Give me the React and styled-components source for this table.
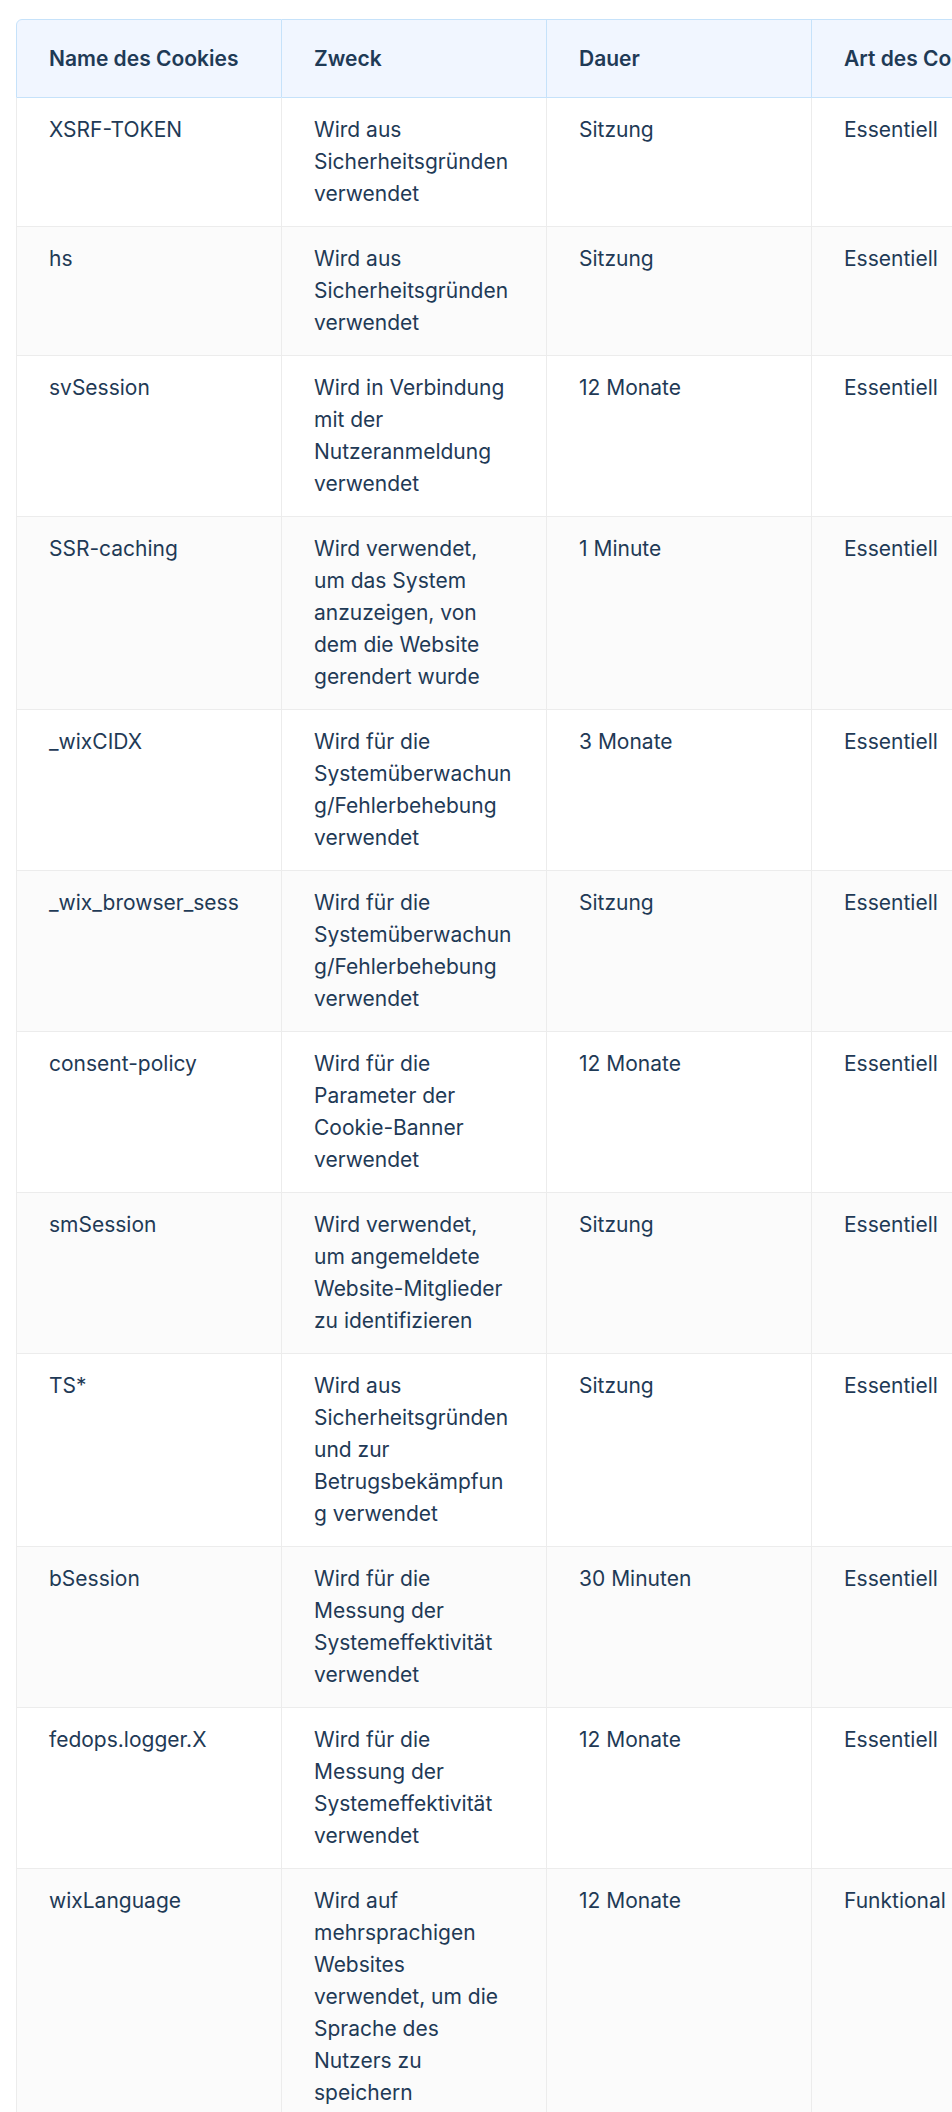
import React from "react";
import styled, { createGlobalStyle } from "styled-components";

const GlobalStyle = createGlobalStyle`
  html, body {
    margin: 0;
    padding: 0;
    background: #ffffff;
    overflow-x: hidden;
  }
  * { box-sizing: border-box; }
`;

const Page = styled.div`
  padding: 19px 0 0 16px;
  font-family: Inter, "Liberation Sans", sans-serif;
  color: #1f3a56;
`;

const Scroller = styled.div`
  overflow: hidden;
  width: 100%;
`;

const Table = styled.table`
  border-collapse: separate;
  border-spacing: 0;
  table-layout: fixed;
  width: 1061px;
`;

const Col = styled.col`
  width: ${(p) => (p.$first ? "266px" : "265px")};
`;

const HeadCell = styled.th`
  text-align: left;
  font-size: 21px;
  line-height: 32px;
  font-weight: 600;
  padding: 23px 32px 22px;
  background: #f1f6ff;
  border-top: 1px solid #c6e2fa;
  border-right: 1px solid #c6e2fa;
  border-bottom: 1px solid #c6e2fa;
  border-left: ${(p) => (p.$first ? "1px solid #c6e2fa" : "none")};
  border-top-left-radius: ${(p) => (p.$first ? "6px" : "0")};
  white-space: nowrap;
  overflow: hidden;
`;

const Row = styled.tr`
  background: ${(p) => (p.$even ? "#fbfbfb" : "#ffffff")};
`;

const Cell = styled.td`
  vertical-align: top;
  font-size: 21px;
  line-height: 32px;
  font-weight: 400;
  padding: 16px 32px;
  border-right: 1px solid #ececec;
  border-bottom: 1px solid #ececec;
  border-left: ${(p) => (p.$first ? "1px solid #ececec" : "none")};
  white-space: nowrap;
  overflow: hidden;
`;

const Line = styled.span`
  display: block;
`;

const headers = ["Name des Cookies", "Zweck", "Dauer", "Art des Cookies"];

const security = ["Wird aus", "Sicherheitsgründen", "verwendet"];
const monitoring = ["Wird für die", "Systemüberwachun", "g/Fehlerbehebung", "verwendet"];
const efficiency = ["Wird für die", "Messung der", "Systemeffektivität", "verwendet"];

const rows = [
  { name: "XSRF-TOKEN", purpose: security, duration: "Sitzung", type: "Essentiell" },
  { name: "hs", purpose: security, duration: "Sitzung", type: "Essentiell" },
  {
    name: "svSession",
    purpose: ["Wird in Verbindung", "mit der", "Nutzeranmeldung", "verwendet"],
    duration: "12 Monate",
    type: "Essentiell",
  },
  {
    name: "SSR-caching",
    purpose: ["Wird verwendet,", "um das System", "anzuzeigen, von", "dem die Website", "gerendert wurde"],
    duration: "1 Minute",
    type: "Essentiell",
  },
  { name: "_wixCIDX", purpose: monitoring, duration: "3 Monate", type: "Essentiell" },
  { name: "_wix_browser_sess", purpose: monitoring, duration: "Sitzung", type: "Essentiell" },
  {
    name: "consent-policy",
    purpose: ["Wird für die", "Parameter der", "Cookie-Banner", "verwendet"],
    duration: "12 Monate",
    type: "Essentiell",
  },
  {
    name: "smSession",
    purpose: ["Wird verwendet,", "um angemeldete", "Website-Mitglieder", "zu identifizieren"],
    duration: "Sitzung",
    type: "Essentiell",
  },
  {
    name: "TS*",
    purpose: ["Wird aus", "Sicherheitsgründen", "und zur", "Betrugsbekämpfun", "g verwendet"],
    duration: "Sitzung",
    type: "Essentiell",
  },
  { name: "bSession", purpose: efficiency, duration: "30 Minuten", type: "Essentiell" },
  { name: "fedops.logger.X", purpose: efficiency, duration: "12 Monate", type: "Essentiell" },
  {
    name: "wixLanguage",
    purpose: [
      "Wird auf",
      "mehrsprachigen",
      "Websites",
      "verwendet, um die",
      "Sprache des",
      "Nutzers zu",
      "speichern",
    ],
    duration: "12 Monate",
    type: "Funktional",
  },
];

export default function App() {
  return (
    <Page>
      <GlobalStyle />
      <Scroller>
        <Table>
          <colgroup>
            <Col $first />
            <Col />
            <Col />
            <Col />
          </colgroup>
          <thead>
            <tr>
              {headers.map((h, i) => (
                <HeadCell key={h} $first={i === 0}>
                  {h}
                </HeadCell>
              ))}
            </tr>
          </thead>
          <tbody>
            {rows.map((r, i) => (
              <Row key={r.name} $even={i % 2 === 1}>
                <Cell $first>{r.name}</Cell>
                <Cell>
                  {r.purpose.map((l, j) => (
                    <Line key={j}>{l}</Line>
                  ))}
                </Cell>
                <Cell>{r.duration}</Cell>
                <Cell>{r.type}</Cell>
              </Row>
            ))}
          </tbody>
        </Table>
      </Scroller>
    </Page>
  );
}
